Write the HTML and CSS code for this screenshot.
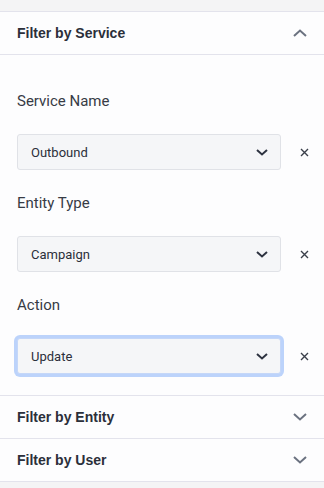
FILE: index.html
```html
<!DOCTYPE html>
<html lang="en">
    <head>
        <meta charset="UTF-8">
        <title>Filters</title>
        <link rel="stylesheet" href="styles.css">
    </head>
    <body>
        <div class="panel">
            <div class="section">
                <div class="section-head">
                    <span>Filter by Service</span>
                    <svg class="head-chevron" width="14" height="8" viewBox="0 0 14 8"><path d="M1 7L7 1.5L13 7" fill="none" stroke="#6b7280" stroke-width="2"/></svg>
                </div>
                <div class="section-body">
                    <label class="field-label">Service Name</label>
                    <div class="field-row">
                        <div class="select">
                            <span>Outbound</span>
                            <svg width="12" height="7" viewBox="0 0 12 7"><path d="M1 1L6 5.5L11 1" fill="none" stroke="#2d3340" stroke-width="2"/></svg>
                        </div>
                        <span class="clear"><svg width="9" height="9" viewBox="0 0 9 9"><path d="M1 1L8 8M8 1L1 8" stroke="#3a3f4a" stroke-width="1.4"/></svg></span>
                    </div>

                    <label class="field-label">Entity Type</label>
                    <div class="field-row">
                        <div class="select">
                            <span>Campaign</span>
                            <svg width="12" height="7" viewBox="0 0 12 7"><path d="M1 1L6 5.5L11 1" fill="none" stroke="#2d3340" stroke-width="2"/></svg>
                        </div>
                        <span class="clear"><svg width="9" height="9" viewBox="0 0 9 9"><path d="M1 1L8 8M8 1L1 8" stroke="#3a3f4a" stroke-width="1.4"/></svg></span>
                    </div>

                    <label class="field-label">Action</label>
                    <div class="field-row last">
                        <div class="select focused">
                            <span>Update</span>
                            <svg width="12" height="7" viewBox="0 0 12 7"><path d="M1 1L6 5.5L11 1" fill="none" stroke="#2d3340" stroke-width="2"/></svg>
                        </div>
                        <span class="clear"><svg width="9" height="9" viewBox="0 0 9 9"><path d="M1 1L8 8M8 1L1 8" stroke="#3a3f4a" stroke-width="1.4"/></svg></span>
                    </div>
                </div>
            </div>
            <div class="section">
                <div class="section-head">
                    <span>Filter by Entity</span>
                    <svg class="head-chevron" width="14" height="8" viewBox="0 0 14 8"><path d="M1 1L7 6.5L13 1" fill="none" stroke="#6b7280" stroke-width="2"/></svg>
                </div>
            </div>
            <div class="section">
                <div class="section-head">
                    <span>Filter by User</span>
                    <svg class="head-chevron" width="14" height="8" viewBox="0 0 14 8"><path d="M1 1L7 6.5L13 1" fill="none" stroke="#6b7280" stroke-width="2"/></svg>
                </div>
            </div>
        </div>
    </body>
</html>
```

FILE: styles.css
```css
body {
    margin: 0;
    padding: 11px 0 0;
    background: #f4f4f5;
    font-family: Roboto, "Liberation Sans", sans-serif;
    color: #2b2f3a;
}
.panel {
    background: #fdfdfe;
    border-top: 1px solid #e3e3ec;
}
.section {
    border-bottom: 1px solid #e3e3ec;
}
.section-head {
    display: flex;
    align-items: center;
    justify-content: space-between;
    height: 42px;
    padding: 0 17px;
    font-family: "Liberation Sans", Arial, sans-serif;
    font-weight: bold;
    font-size: 14px;
    color: #2b2f3a;
}
.section-body {
    border-top: 1px solid #e3e3ec;
    padding: 36px 0 21px 17px;
}
.field-label {
    display: block;
    font-size: 15px;
    line-height: 20px;
    color: #373b45;
    margin-bottom: 23px;
}
.field-row {
    display: flex;
    align-items: center;
    padding-right: 8px;
    margin-bottom: 23px;
}
.field-row.last {
    margin-bottom: 0;
}
.select {
    flex: 1;
    height: 34px;
    display: flex;
    align-items: center;
    justify-content: space-between;
    padding: 0 12px 0 13px;
    background: #f5f6f8;
    border: 1px solid #e0e2e7;
    border-radius: 3px;
    font-size: 13px;
    color: #2b2f3a;
}
.select.focused {
    border-color: #c5d7f8;
    box-shadow: 0 0 0 3px #bcd3fb;
}
.clear {
    width: 24px;
    margin-left: 8px;
    display: flex;
    justify-content: center;
    padding-left: 3px;
}
```
